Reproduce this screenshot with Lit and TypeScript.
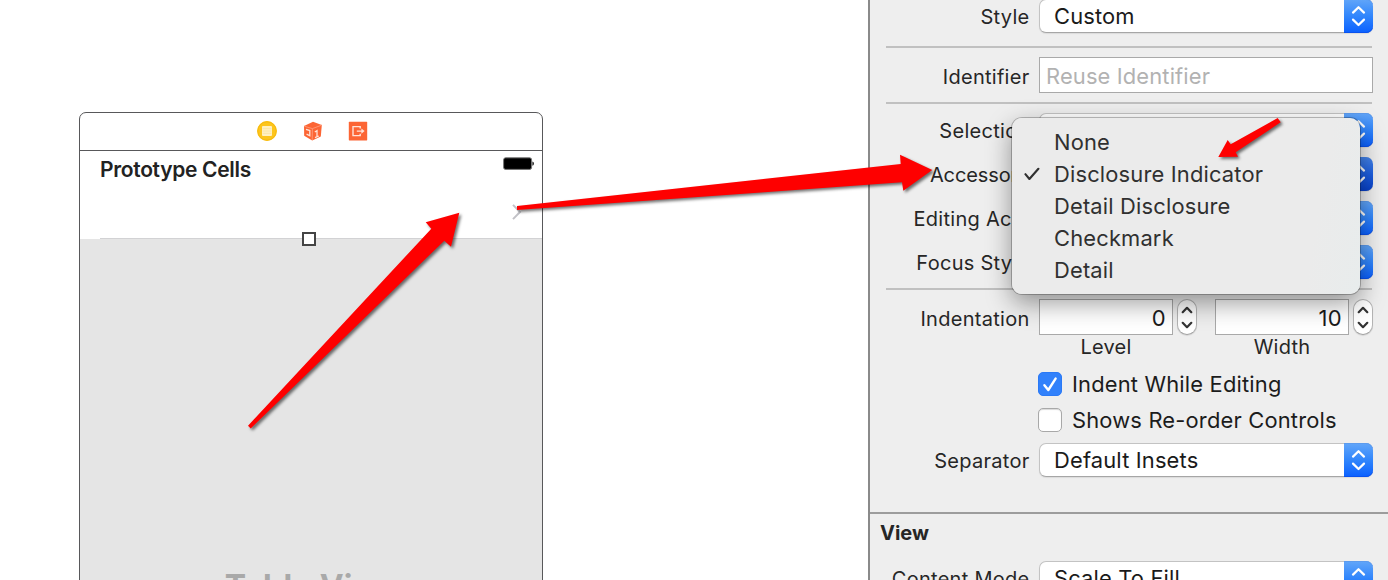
import { LitElement, html, css, svg, nothing } from "lit";
import { customElement, property } from "lit/decorators.js";
import { classMap } from "lit/directives/class-map.js";

@customElement("popup-select")
export class PopupSelect extends LitElement {
  @property() value = "";
  @property({ type: Boolean, reflect: true }) pressed = false;
  static styles = css`
    :host {
      display: flex;
      box-sizing: border-box;
      width: 334px;
      height: 34px;
      border-radius: 7px;
      background: #fff;
      border: 1px solid #c3c3c3;
      border-bottom-color: #a6a6a6;
      border-right: 0;
      box-shadow: 0 1px 1px rgba(0, 0, 0, 0.08);
    }
    .value {
      flex: 1;
      padding-left: 14px;
      line-height: 33px;
      font-size: 21.9px;
      letter-spacing: 0.16px;
      color: #1a1a1a;
      white-space: nowrap;
    }
    .knob {
      width: 29px;
      height: 34px;
      margin: -1px 0;
      border-radius: 0 7px 7px 0;
      background: linear-gradient(#62a6f9, #3186fc 50%, #0a60ff);
      box-shadow: inset 0 -1px 0 #0a52ee, inset 0 1px 0 #5c9bee;
    }
    :host([pressed]) .knob {
      background: linear-gradient(#4584ea, #1d5fe0 50%, #0840c8);
      box-shadow: none;
    }
    svg { display: block; }
  `;
  render() {
    return html`<span class="value">${this.value}</span>
      <span class="knob"><svg width="29" height="34" viewBox="0 0 29 34" fill="none" stroke="#fff" stroke-width="2.2" stroke-linecap="round" stroke-linejoin="round">
        <path d="M9 13.6 14.5 8.2 20 13.6M9 20.6 14.5 26 20 20.6" /></svg></span>`;
  }
}

@customElement("number-stepper")
export class NumberStepper extends LitElement {
  @property() value = "";
  @property() caption = "";
  static styles = css`
    :host { display: block; }
    .line { display: flex; gap: 4px; }
    .field {
      box-sizing: border-box;
      width: 134px;
      height: 36px;
      border: 1px solid #a9a9a9;
      background: #fff;
      padding-right: 6px;
      text-align: right;
      line-height: 36px;
      font-size: 22px;
      letter-spacing: 0.3px;
      color: #1a1a1a;
    }
    .stepper {
      box-sizing: border-box;
      width: 20px;
      height: 36px;
      border: 1px solid #b4b4b4;
      border-bottom-color: #a0a0a0;
      border-radius: 10px;
      background: #fff;
      box-shadow: 0 1px 1px rgba(0, 0, 0, 0.1);
    }
    svg { display: block; }
    .caption {
      width: 134px;
      margin-top: 1px;
      height: 22px;
      line-height: 22px;
      text-align: center;
      font-size: 20px;
      letter-spacing: 0.25px;
      color: #262626;
    }
  `;
  render() {
    return html`<div class="line">
        <div class="field">${this.value}</div>
        <div class="stepper"><svg width="18" height="34" viewBox="0 0 18 34" fill="none" stroke="#333" stroke-width="2.2" stroke-linecap="round" stroke-linejoin="round">
          <path d="M4.7 12.2 9 7.8 13.3 12.2M4.7 22.8 9 27.2 13.3 22.8" /></svg></div>
      </div>
      <div class="caption">${this.caption}</div>`;
  }
}

const MENU = ["None", "Disclosure Indicator", "Detail Disclosure", "Checkmark", "Detail"];
const CHECKED = "Disclosure Indicator";

const ARROWS = [
  "248,425.7 431.3,228.7 425.7,222.3 459.3,212.7 451,246.7 444.3,240.7 250.7,428.5",
  "517,206 900.7,164 900,154.7 932.3,170 903.3,190.7 902,182.3 517,210",
  "1277.7,118 1280.7,122.3 1235.7,152.3 1238,156.7 1218.3,157 1227.7,140 1230.7,144.3",
];

@customElement("app-root")
export class AppRoot extends LitElement {
  static styles = css`
    :host {
      display: grid;
      grid-template-columns: 868px 520px;
      position: relative;
      width: 1388px;
      height: 580px;
      overflow: hidden;
      background: #fff;
      font-family: Inter, "Liberation Sans", sans-serif;
      color: #262626;
    }
    svg { display: block; }

    .canvas { padding: 112px 0 0 79px; overflow: hidden; height: 468px; }
    .scene {
      box-sizing: border-box;
      width: 464px;
      height: 520px;
      border: 1.4px solid #58585a;
      border-radius: 7px 7px 0 0;
      display: flex;
      flex-direction: column;
    }
    .dock {
      box-sizing: border-box;
      height: 38px;
      border-bottom: 1px solid #58585a;
      display: flex;
      justify-content: center;
      align-items: center;
      gap: 25.5px;
      padding: 0 0 1px 3px;
    }
    .cell-area {
      display: flex;
      justify-content: space-between;
      height: 88px;
      box-sizing: border-box;
      padding: 6px 8px 0 20px;
    }
    .heading {
      font-size: 21px;
      line-height: 25px;
      font-weight: 600;
      letter-spacing: -0.32px;
      color: #222;
    }
    .status { display: flex; flex-direction: column; align-items: flex-end; }
    .chevron { margin: 33px 12px 0 0; }
    .table {
      flex: 1;
      background: #e5e5e5;
      display: flex;
      flex-direction: column;
      align-items: center;
    }
    .rule { align-self: flex-end; width: 442px; height: 1px; background: #d2d2d4; margin-top: -1px; }
    .handle {
      box-sizing: border-box;
      width: 14px;
      height: 14px;
      border: 2px solid #444;
      background: #fff;
      margin: -7px 4px 0 0;
    }
    .table-name {
      margin: 321px 0 0 2px;
      font-size: 32px;
      line-height: 40px;
      font-weight: 700;
      letter-spacing: 0.3px;
      color: #a9a9a9;
    }

    .panel {
      box-sizing: border-box;
      height: 580px;
      overflow: hidden;
      background: #eee;
      border-left: 2px solid #8a8a8a;
      display: flex;
      flex-direction: column;
    }
    .row {
      flex: none;
      display: grid;
      grid-template-columns: 159.5px 1fr;
      column-gap: 9.5px;
      height: 34px;
      margin-bottom: 10px;
    }
    .row.first { margin: -1px 0 13px; }
    .row.tall { height: 36px; margin: 9px 0; }
    .row.top { margin-top: 9px; }
    .row.last { margin-bottom: 9px; }
    .row.indent { height: 59px; margin: 9px 0 14px; }
    .row.separator { margin: 11px 0 35px; }
    .row.mode { margin: 0; }
    .label {
      text-align: right;
      line-height: 36px;
      font-size: 20px;
      letter-spacing: 0.28px;
      white-space: nowrap;
    }
    .tall .label, .indent .label { line-height: 40px; }
    .tight .label { letter-spacing: -0.1px; }
    .divider { flex: none; height: 2px; margin: 0 16px; background: #c0c0c0; }
    .input {
      box-sizing: border-box;
      width: 334px;
      height: 36px;
      border: 1px solid #a9a9a9;
      background: #fff;
      padding-left: 6px;
      line-height: 36px;
      font-size: 21.9px;
      letter-spacing: 0.14px;
      color: #b2b2b2;
    }
    .numbers { display: flex; gap: 18px; }
    .check {
      flex: none;
      display: flex;
      align-items: center;
      gap: 10px;
      height: 24px;
      margin: 0 0 12px 168px;
      font-size: 21.9px;
      letter-spacing: 0.18px;
      white-space: nowrap;
      color: #1c1c1c;
    }
    .check.end { margin-bottom: 0; }
    .box {
      box-sizing: border-box;
      width: 24px;
      height: 24px;
      border-radius: 5px;
      background: #fff;
      border: 1px solid #a8a8a8;
      box-shadow: inset 0 1px 1px rgba(0, 0, 0, 0.15);
    }
    .box.on { background: #3181fb; border-color: #2a79f6; box-shadow: none; }
    .section {
      flex: none;
      height: 49px;
      box-sizing: border-box;
      border-top: 2px solid #9c9c9c;
      padding: 6px 0 0 10px;
      font-size: 20px;
      line-height: 26px;
      font-weight: 700;
    }

    .menu {
      position: absolute;
      left: 1012px;
      top: 118px;
      box-sizing: border-box;
      width: 348px;
      height: 176px;
      padding-top: 8px;
      border-radius: 10px;
      background: linear-gradient(100deg, #ebebeb 85%, #e8ecec);
      box-shadow: 0 0 0 1px rgba(0, 0, 0, 0.24), 0 9px 26px rgba(0, 0, 0, 0.4);
    }
    .item {
      display: grid;
      grid-template-columns: 42px 1fr;
      align-items: center;
      height: 32px;
      line-height: 32px;
      font-size: 21.9px;
      letter-spacing: 0.17px;
      color: #303030;
    }
    .tick { padding-left: 12px; }
    .arrows {
      position: absolute;
      inset: 0;
      filter: drop-shadow(2px 2.5px 1.5px rgba(0, 0, 0, 0.55));
    }
  `;

  private selectRow(label: string, value: string, cls = "", pressed = false) {
    return html`<div class="row ${cls}">
      <div class="label">${label}</div>
      <popup-select .value=${value} ?pressed=${pressed}></popup-select>
    </div>`;
  }

  private checkRow(label: string, on: boolean) {
    return html`<div class=${classMap({ check: true, end: !on })}>
      <span class=${classMap({ box: true, on })}>${on
        ? html`<svg width="22" height="22" viewBox="0 0 22 22" fill="none" stroke="#fff" stroke-width="2.4" stroke-linecap="round" stroke-linejoin="round"><path d="M5.4 12.2 9.3 17 16.6 5.6" /></svg>`
        : nothing}</span>
      <span>${label}</span>
    </div>`;
  }

  render() {
    return html`
      <div class="canvas">
        <div class="scene">
          <div class="dock">
            <svg width="20" height="20" viewBox="0 0 20 20">
              <circle cx="10" cy="10" r="9.9" fill="#fdc51c" />
              <circle cx="10" cy="10" r="9.2" fill="none" stroke="#f6b90e" stroke-width="1" />
              <rect x="5" y="5" width="10" height="10" rx="1" fill="#fff0c0" />
              <path d="M5.6 7.6h8.8M5.6 10h8.8M5.6 12.4h8.8" stroke="#fbe3a0" stroke-width=".8" />
            </svg>
            <svg width="20" height="20" viewBox="0 0 20 20">
              <path d="M10 .8 18.8 4 17.8 15.4 9.2 19.4 1.2 14.8 1 5Z" fill="#fc6534" />
              <path d="M1.2 5.2 9.4 7.6 18.6 4.2M9.4 7.6 9.2 19" fill="none" stroke="#ff9a78" stroke-width=".9" />
              <path d="M3 8.4 6.8 9.6V14.8L3.6 13.2M11.8 11 14 9.6V15.6M12 16.6 15.8 15" fill="none" stroke="#ffe3d8" stroke-width="1.3" />
            </svg>
            <svg width="20" height="20" viewBox="0 0 20 20">
              <rect x=".8" y=".8" width="18.4" height="18.6" rx=".6" fill="#fc6534" />
              <path d="M12.2 7.4V5.6H5V14.6H12.2V12.8M8.8 10.1H15" fill="none" stroke="#ffe3d8" stroke-width="1.4" />
              <path d="M13.4 7.4 16.6 10.1 13.4 12.8Z" fill="#ffe3d8" />
            </svg>
          </div>
          <div class="cell-area">
            <div class="heading">Prototype Cells</div>
            <div class="status">
              <svg width="31" height="14" viewBox="0 0 31 14">
                <rect x=".6" y=".8" width="28" height="11.6" rx="2" fill="#000" stroke="#777" stroke-width="1" />
                <path d="M29.4 4.4Q31 4.6 31 6.6T29.4 8.8Z" fill="#222" />
              </svg>
              <svg class="chevron" width="10" height="16" viewBox="0 0 10 16" fill="none" stroke="#c2c2c7" stroke-width="2"><path d="M1 .9 8 8 1 15.1" /></svg>
            </div>
          </div>
          <div class="table">
            <div class="rule"></div>
            <div class="handle"></div>
            <div class="table-name">Table View</div>
          </div>
        </div>
      </div>

      <div class="panel">
        ${this.selectRow("Style", "Custom", "first")}
        <div class="divider"></div>
        <div class="row tall">
          <div class="label">Identifier</div>
          <div class="input">Reuse Identifier</div>
        </div>
        <div class="divider"></div>
        ${this.selectRow("Selection", "", "top")}
        ${this.selectRow("Accessory", "", "tight", true)}
        ${this.selectRow("Editing Acc.", "")}
        ${this.selectRow("Focus Style", "", "last")}
        <div class="divider"></div>
        <div class="row indent">
          <div class="label">Indentation</div>
          <div class="numbers">
            <number-stepper value="0" caption="Level"></number-stepper>
            <number-stepper value="10" caption="Width"></number-stepper>
          </div>
        </div>
        ${this.checkRow("Indent While Editing", true)}
        ${this.checkRow("Shows Re-order Controls", false)}
        ${this.selectRow("Separator", "Default Insets", "separator")}
        <div class="section">View</div>
        ${this.selectRow("Content Mode", "Scale To Fill", "mode")}
      </div>

      <div class="menu">
        ${MENU.map((name) => html`<div class="item">
          <span class="tick">${name === CHECKED
            ? html`<svg width="16" height="14" viewBox="0 0 16 14" fill="none" stroke="#303030" stroke-width="2.1" stroke-linecap="round" stroke-linejoin="round"><path d="M1.4 7.2 5.4 12 14.4 1.8" /></svg>`
            : nothing}</span>
          <span>${name}</span>
        </div>`)}
      </div>

      <svg class="arrows" width="1388" height="580" viewBox="0 0 1388 580" fill="#fe0000">
        ${ARROWS.map((points) => svg`<polygon points=${points} />`)}
      </svg>
    `;
  }
}
